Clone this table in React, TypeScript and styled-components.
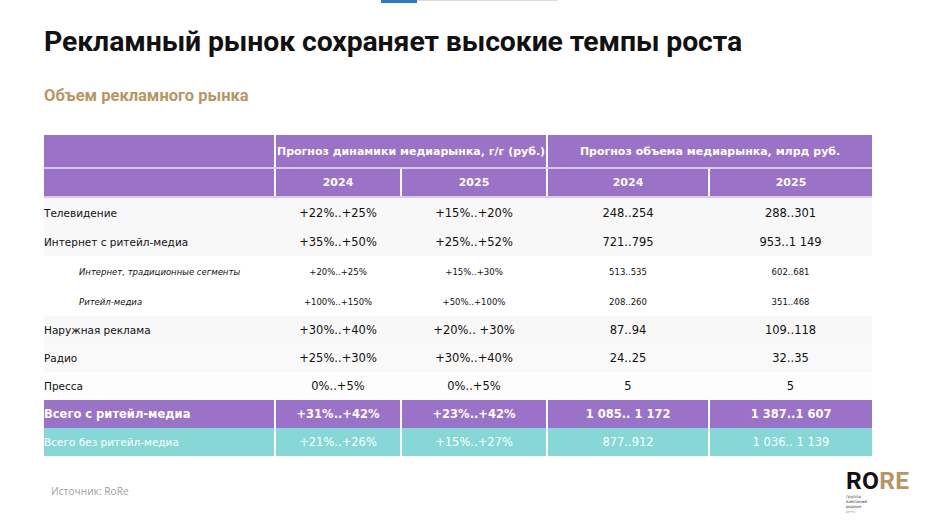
import React from "react";
import styled, { createGlobalStyle } from "styled-components";

const Global = createGlobalStyle`
  html, body { margin: 0; padding: 0; background: #fff; }
  body { width: 941px; height: 529px; overflow: hidden; }
`;

const Page = styled.div`
  position: relative;
  width: 941px;
  height: 529px;
  box-sizing: border-box;
  padding: 0 0 0 44px;
  font-family: "DejaVu Sans", Verdana, sans-serif;
`;

const Progress = styled.div`
  position: absolute;
  top: 0;
  left: 381px;
  width: 177px;
  height: 2px;
  display: flex;
`;

const ProgressDone = styled.div`
  width: 36px;
  height: 3px;
  background: #2b79c2;
`;

const ProgressRest = styled.div`
  flex: 1;
  height: 1px;
  background: #dcdcdc;
`;

const Title = styled.h1`
  margin: 0;
  padding-top: 26px;
  font-family: Roboto, "Liberation Sans", sans-serif;
  font-weight: 700;
  font-size: 28.4px;
  line-height: 32px;
  letter-spacing: -0.1px;
  color: #111;
`;

const Subtitle = styled.h2`
  margin: 0;
  padding-top: 28px;
  font-family: Roboto, "Liberation Sans", sans-serif;
  font-weight: 700;
  font-size: 16.5px;
  line-height: 20px;
  color: #b89563;
`;

const Table = styled.table`
  margin-top: 29px;
  width: 828px;
  border-collapse: collapse;
  table-layout: fixed;
  font-family: "DejaVu Sans", Verdana, sans-serif;
`;

const HeadCell = styled.th<{ $h: number }>`
  height: ${(p) => p.$h}px;
  padding: 0;
  background: #9a72c7;
  color: #fff;
  font-size: 11px;
  font-weight: 700;
  text-align: center;
  border-left: 2px solid #fff;
  border-bottom: 2px solid #d8c8ef;
  &:first-child { border-left: none; }
`;

const Row = styled.tr<{ $bg: string }>`
  background: ${(p) => p.$bg};
`;

const LabelCell = styled.td<{ $h: number; $sub?: boolean; $color: string; $bold?: boolean }>`
  height: ${(p) => p.$h}px;
  padding: 0 0 0 ${(p) => (p.$sub ? 35 : 0)}px;
  font-size: ${(p) => (p.$sub ? 8.5 : p.$bold ? 11.5 : 10.5)}px;
  font-style: ${(p) => (p.$sub ? "italic" : "normal")};
  font-weight: ${(p) => (p.$bold ? 700 : 400)};
  color: ${(p) => p.$color};
  white-space: nowrap;
`;

const ValueCell = styled.td<{ $sub?: boolean; $color: string; $bold?: boolean; $lines?: boolean }>`
  padding: 0;
  text-align: center;
  font-size: ${(p) => (p.$sub ? 8.5 : 11.5)}px;
  font-weight: ${(p) => (p.$bold ? 700 : 400)};
  color: ${(p) => p.$color};
  border-left: ${(p) => (p.$lines ? "2px solid #fff" : "none")};
  white-space: nowrap;
`;

const Footer = styled.div`
  position: absolute;
  left: 51px;
  top: 484px;
  font-family: "Open Sans", "DejaVu Sans", sans-serif;
  font-size: 10.2px;
  color: #a0a0a0;
`;

const Logo = styled.div`
  position: absolute;
  left: 846px;
  top: 470px;
  display: flex;
  flex-direction: column;
`;

const LogoWord = styled.div`
  font-family: Roboto, "Liberation Sans", sans-serif;
  font-weight: 700;
  font-size: 24.5px;
  line-height: 22px;
  letter-spacing: 0.3px;
  margin-bottom: 2px;
  color: #111;
`;

const LogoGold = styled.span`
  color: #b89563;
`;

const LogoSmall = styled.div<{ $gold?: boolean }>`
  font-family: "DejaVu Sans", sans-serif;
  font-size: 4px;
  line-height: 5px;
  color: ${(p) => (p.$gold ? "#c2a57a" : "#333")};
`;

type R = {
  label: string;
  v: [string, string, string, string];
  h: number;
  kind: "main" | "sub" | "total" | "cyan";
  bg?: string;
};

const rows: R[] = [
  { label: "Телевидение", v: ["+22%..+25%", "+15%..+20%", "248..254", "288..301"], h: 29, kind: "main", bg: "#f8f8f8" },
  { label: "Интернет с ритейл-медиа", v: ["+35%..+50%", "+25%..+52%", "721..795", "953..1 149"], h: 29, kind: "main", bg: "#f8f8f8" },
  { label: "Интернет, традиционные сегменты", v: ["+20%..+25%", "+15%..+30%", "513..535", "602..681"], h: 31, kind: "sub", bg: "#ffffff" },
  { label: "Ритейл-медиа", v: ["+100%..+150%", "+50%..+100%", "208..260", "351..468"], h: 29, kind: "sub", bg: "#ffffff" },
  { label: "Наружная реклама", v: ["+30%..+40%", "+20%.. +30%", "87..94", "109..118"], h: 28, kind: "main", bg: "#f8f8f8" },
  { label: "Радио", v: ["+25%..+30%", "+30%..+40%", "24..25", "32..35"], h: 28, kind: "main", bg: "#f9f9f9" },
  { label: "Пресса", v: ["0%..+5%", "0%..+5%", "5", "5"], h: 28, kind: "main", bg: "#fdfdfd" },
  { label: "Всего с ритейл-медиа", v: ["+31%..+42%", "+23%..+42%", "1 085.. 1 172", "1 387..1 607"], h: 28, kind: "total", bg: "#9a72c7" },
  { label: "Всего без ритейл-медиа", v: ["+21%..+26%", "+15%..+27%", "877..912", "1 036.. 1 139"], h: 28, kind: "cyan", bg: "#85d8d5" },
];

export default function App() {
  return (
    <>
      <Global />
      <Page>
        <Progress>
          <ProgressDone />
          <ProgressRest />
        </Progress>
        <Title>Рекламный рынок сохраняет высокие темпы роста</Title>
        <Subtitle>Объем рекламного рынка</Subtitle>
        <Table>
          <colgroup>
            <col style={{ width: 231 }} />
            <col style={{ width: 126 }} />
            <col style={{ width: 146 }} />
            <col style={{ width: 162 }} />
            <col style={{ width: 163 }} />
          </colgroup>
          <thead>
            <tr>
              <HeadCell $h={32} />
              <HeadCell $h={32} colSpan={2}>Прогноз динамики медиарынка, г/г (руб.)</HeadCell>
              <HeadCell $h={32} colSpan={2}>Прогноз объема медиарынка, млрд руб.</HeadCell>
            </tr>
            <tr>
              <HeadCell $h={27} />
              <HeadCell $h={27}>2024</HeadCell>
              <HeadCell $h={27}>2025</HeadCell>
              <HeadCell $h={27}>2024</HeadCell>
              <HeadCell $h={27}>2025</HeadCell>
            </tr>
          </thead>
          <tbody>
            {rows.map((r) => {
              const sub = r.kind === "sub";
              const bold = r.kind === "total";
              const lines = r.kind === "total" || r.kind === "cyan";
              const color = r.kind === "total" || r.kind === "cyan" ? "#fff" : "#111";
              return (
                <Row key={r.label} $bg={r.bg || "#fff"}>
                  <LabelCell $h={r.h} $sub={sub} $bold={bold} $color={color}>
                    {r.label}
                  </LabelCell>
                  {r.v.map((v, i) => (
                    <ValueCell key={i} $sub={sub} $bold={bold} $lines={lines} $color={color}>
                      {v}
                    </ValueCell>
                  ))}
                </Row>
              );
            })}
          </tbody>
        </Table>
        <Footer>Источник: RoRe</Footer>
        <Logo>
          <LogoWord>
            RO<LogoGold>RE</LogoGold>
          </LogoWord>
          <LogoSmall>группа</LogoSmall>
          <LogoSmall>компаний</LogoSmall>
          <LogoSmall>родная</LogoSmall>
          <LogoSmall $gold>речь</LogoSmall>
        </Logo>
      </Page>
    </>
  );
}
